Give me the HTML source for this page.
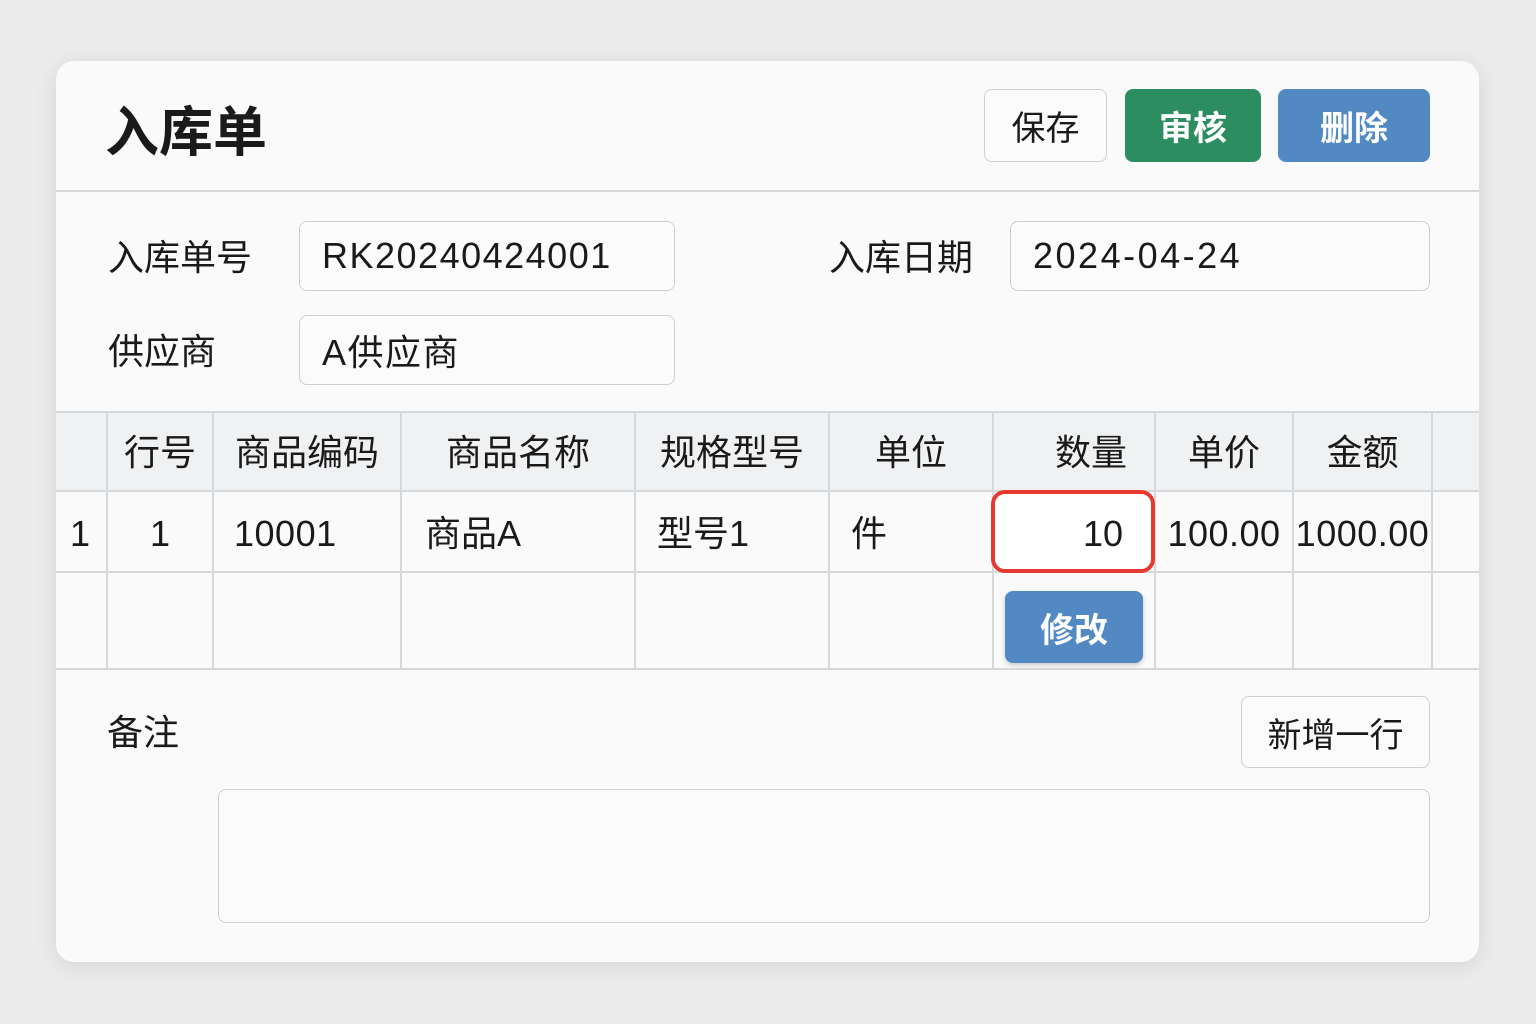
<!DOCTYPE html>
<html><head><meta charset="utf-8"><style>
body{margin:0;width:1536px;height:1024px;background:#ececec;font-family:"Liberation Sans","Noto Sans CJK SC",sans-serif;color:#1a1a1a;overflow:hidden}
.a{position:absolute}
.card{left:56px;top:61px;width:1423px;height:901px;background:#fafafa;border-radius:18px;box-shadow:0 4px 24px rgba(0,0,0,.10)}
.btn{position:absolute;border-radius:8px;font-size:34px;display:flex;align-items:center;justify-content:center;box-sizing:border-box}
.in{position:absolute;border:1.5px solid #cfcfcf;border-radius:8px;background:#fbfbfb;box-sizing:border-box;font-size:36px;display:flex;align-items:center;padding-left:22px;letter-spacing:1.5px}
.lbl{position:absolute;font-size:36px;line-height:40px}
.vl{position:absolute;width:1.5px;background:#d6d9dc}
.hl{position:absolute;height:1.5px;background:#d6d9dc;left:56px;width:1423px}
.t{position:absolute;font-size:36px;line-height:40px;text-align:center}
.n{letter-spacing:0.5px}
</style></head><body>
<div class="a card"></div>
<div class="a" style="left:105px;top:98px;font-size:54px;font-weight:bold;line-height:70px">入库单</div>
<div class="btn" style="left:984px;top:89px;width:123px;height:73px;border:1.5px solid #d0d0d0;background:#fbfbfb">保存</div>
<div class="btn" style="left:1125px;top:89px;width:136px;height:73px;background:#2b8d60;color:#fff;font-weight:bold">审核</div>
<div class="btn" style="left:1278px;top:89px;width:152px;height:73px;background:#5289c3;color:#fff;font-weight:bold">删除</div>
<div class="hl" style="top:190px"></div>
<div class="lbl" style="left:108px;top:238px">入库单号</div>
<div class="in" style="left:299px;top:221px;width:376px;height:70px">RK20240424001</div>
<div class="lbl" style="left:829px;top:238px">入库日期</div>
<div class="in" style="left:1010px;top:221px;width:420px;height:70px;letter-spacing:2.5px">2024-04-24</div>
<div class="lbl" style="left:108px;top:332px">供应商</div>
<div class="in" style="left:299px;top:315px;width:376px;height:70px">A供应商</div>
<div class="a" style="left:56px;top:411px;width:1423px;height:79px;background:#f0f1f2"></div>
<div class="hl" style="top:411px"></div>
<div class="hl" style="top:490px"></div>
<div class="hl" style="top:571px"></div>
<div class="hl" style="top:668px"></div>
<div class="vl" style="left:106px;top:411px;height:258px"></div>
<div class="vl" style="left:212px;top:411px;height:258px"></div>
<div class="vl" style="left:400px;top:411px;height:258px"></div>
<div class="vl" style="left:634px;top:411px;height:258px"></div>
<div class="vl" style="left:828px;top:411px;height:258px"></div>
<div class="vl" style="left:992px;top:411px;height:258px"></div>
<div class="vl" style="left:1154px;top:411px;height:258px"></div>
<div class="vl" style="left:1292px;top:411px;height:258px"></div>
<div class="vl" style="left:1431px;top:411px;height:258px"></div>
<div class="t" style="left:107px;width:106px;top:433px">行号</div>
<div class="t" style="left:213px;width:188px;top:433px">商品编码</div>
<div class="t" style="left:401px;width:234px;top:433px">商品名称</div>
<div class="t" style="left:635px;width:194px;top:433px">规格型号</div>
<div class="t" style="left:829px;width:164px;top:433px">单位</div>
<div class="t" style="left:993px;width:134px;top:433px;text-align:right">数量</div>
<div class="t" style="left:1155px;width:138px;top:433px">单价</div>
<div class="t" style="left:1293px;width:139px;top:433px">金额</div>
<div class="t" style="left:70px;top:514px">1</div>
<div class="t" style="left:107px;width:106px;top:514px">1</div>
<div class="t n" style="left:234px;top:514px">10001</div>
<div class="t" style="left:425px;top:514px">商品A</div>
<div class="t" style="left:657px;top:514px">型号1</div>
<div class="t" style="left:851px;top:514px">件</div>
<div class="a" style="left:991px;top:490px;width:164px;height:83px;border:4px solid #e63a30;border-radius:14px;box-sizing:border-box;background:#fff"></div>
<div class="t" style="left:993px;width:130px;top:514px;text-align:right">10</div>
<div class="t n" style="left:1155px;width:138px;top:514px">100.00</div>
<div class="t n" style="left:1293px;width:139px;top:514px">1000.00</div>
<div class="btn" style="left:1005px;top:591px;width:138px;height:72px;background:#5289c3;color:#fff;font-weight:bold;box-shadow:0 2px 5px rgba(0,0,0,.2)">修改</div>
<div class="lbl" style="left:107px;top:713px">备注</div>
<div class="btn" style="left:1241px;top:696px;width:189px;height:72px;border:1.5px solid #d0d0d0;background:#fbfbfb">新增一行</div>
<div class="a" style="left:218px;top:789px;width:1212px;height:134px;border:1.5px solid #d0d0d0;border-radius:8px;box-sizing:border-box;background:#fbfbfb"></div>
</body></html>
